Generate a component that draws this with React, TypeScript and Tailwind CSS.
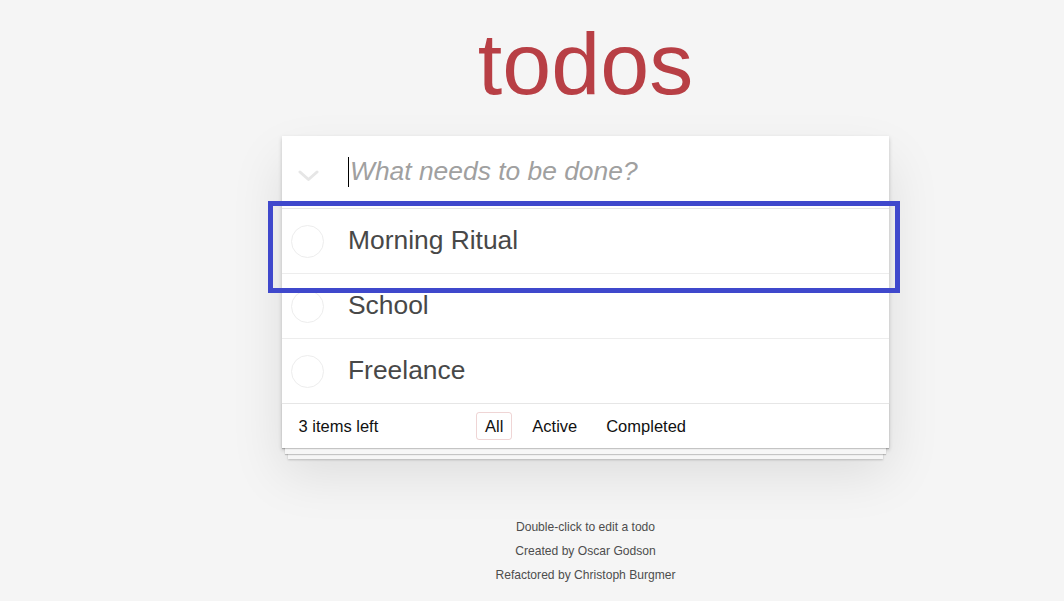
import React from 'react';

const todos = ['Morning Ritual', 'School', 'Freelance'];
const filters = ['All', 'Active', 'Completed'];

function TodoItem({ title }: { title: string }) {
  return (
    <li className="flex items-center border-b border-[#ededed] last:border-b-0 h-[65px] last:h-[64px]">
      <div className="w-[66px] flex justify-start pl-[9px] pt-[1px]">
        <div className="w-[33px] h-[33px] rounded-full border border-[#ededed]" />
      </div>
      <label className="text-[26.4px] leading-[31.7px] text-[#484848]">{title}</label>
    </li>
  );
}

export default function App() {
  return (
    <div className="relative min-h-[601px] bg-[#f5f5f5] font-['Liberation_Sans',Arial,sans-serif] pt-[20px]">
      <div className="ml-[282px] w-[607px]">
        <h1 className="text-center text-[88px] leading-[88px] h-[88px] text-[#b83f45] mb-[28px]">todos</h1>

        <section className="bg-white shadow-[0_2px_4px_rgba(0,0,0,0.2),0_25px_50px_rgba(0,0,0,0.1)]">
          <header className="flex items-center h-[72px]">
            <div className="w-[66px] flex justify-start pl-[16px] pt-[8px]">
              <svg width="21" height="12" viewBox="0 0 21 12" fill="none">
                <polyline points="2,2 10.5,9.5 19,2" stroke="#e6e6e6" strokeWidth="3" strokeLinecap="round" strokeLinejoin="round" />
              </svg>
            </div>
            <div className="flex items-center text-[26.4px] italic text-[#a0a0a0]">
              <span className="inline-block w-px h-[30px] bg-black mr-px" />
              What needs to be done?
            </div>
          </header>

          <ul className="border-t border-[#e6e6e6]">
            {todos.map((t) => (
              <TodoItem key={t} title={t} />
            ))}
          </ul>

          <footer className="grid grid-cols-[1fr_auto_1fr] items-center h-[45px] px-[16.5px] border-t border-[#e6e6e6] text-[16.5px] text-[#111] shadow-[0_1px_1px_rgba(0,0,0,0.2),0_9px_0_-3px_#f6f6f6,0_10px_1px_-3px_rgba(0,0,0,0.2),0_17px_0_-6px_#f6f6f6,0_18px_2px_-6px_rgba(0,0,0,0.2)]">
            <span>3 items left</span>
            <ul className="flex items-center gap-[11.6px]">
              {filters.map((f, i) => (
                <li key={f}>
                  <a
                    className={`block px-[7.7px] py-[3.3px] leading-[19px] rounded-[3px] border ${
                      i === 0 ? 'border-[rgba(175,47,47,0.2)]' : 'border-transparent'
                    }`}
                  >
                    {f}
                  </a>
                </li>
              ))}
            </ul>
            <span />
          </footer>
        </section>

        <div className="mt-[73px] text-center text-[12.1px] leading-[12.1px] text-[#4d4d4d] flex flex-col gap-[12px]">
          <p>Double-click to edit a todo</p>
          <p>Created by Oscar Godson</p>
          <p>Refactored by Christoph Burgmer</p>
        </div>
      </div>

      <div className="absolute left-[268px] top-[201px] w-[632px] h-[92px] border-[5px] border-[#3f48cc]" />
    </div>
  );
}
